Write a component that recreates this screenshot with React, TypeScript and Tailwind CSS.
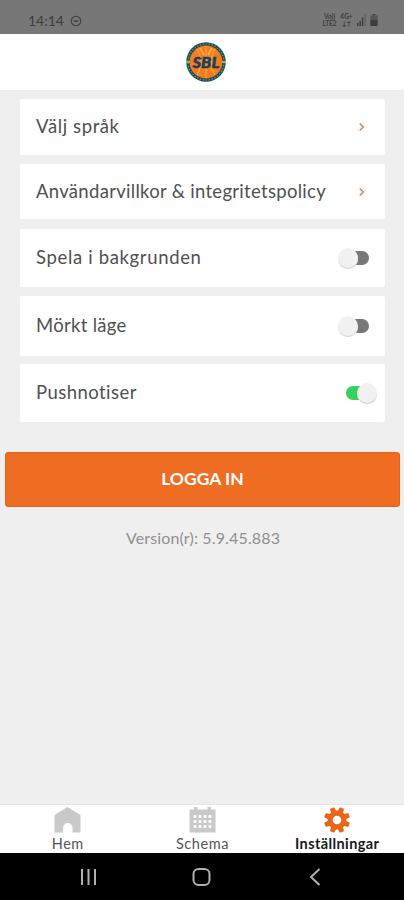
import React from 'react';

const links = [
  { label: 'Välj språk', box: 'h-[56px] mb-[9px] pb-[1px]', text: 'tracking-[0.6px]' },
  { label: 'Användarvillkor & integritetspolicy', box: 'h-[55px] mb-[10px]', text: 'tracking-[0.3px]' },
];

const toggles = [
  { label: 'Spela i bakgrunden', on: false, box: 'h-[58px] mb-[9px]', text: 'tracking-[0.65px]' },
  { label: 'Mörkt läge', on: false, box: 'h-[60px] mb-[8px]', text: 'tracking-[0.3px]' },
  { label: 'Pushnotiser', on: true, box: 'h-[58px]', text: 'tracking-[0.45px]' },
];

function StatusBar() {
  return (
    <div className="flex h-[34px] items-start bg-[#777777] pl-[28px] pr-[26px] pt-[12px] text-[#3d3d3d]">
      <span className="w-[36px] whitespace-nowrap text-[14px] leading-[17px]">14:14</span>
      <svg className="ml-[6px] mt-[3px] h-[12px] w-[12px]" viewBox="0 0 12 12" fill="none" stroke="currentColor">
        <circle cx="6" cy="6" r="4.8" strokeWidth="1.1" />
        <path d="M3.5 6h5" strokeWidth="1.3" />
      </svg>
      <div className="ml-auto flex pt-[2px] text-[6.5px] font-bold leading-[6.5px]">
        <div className="w-[17px] text-center">
          <div>Vo))</div>
          <div>LTE2</div>
        </div>
        <div className="ml-[2px] w-[13px] text-center">
          <div>4G+</div>
          <div>↓↑</div>
        </div>
        <svg className="ml-[4px] h-[12px] w-[9px]" viewBox="0 0 9 12" fill="currentColor">
          <path d="M0 9h1.5v3H0zM2.4 7h1.5v5H2.4zM4.8 3.5h1.5V12H4.8z" />
          <path d="M7.4 0h1.3v12H7.4z" opacity=".35" />
        </svg>
        <svg className="ml-[4px] h-[12px] w-[8px]" viewBox="0 0 8 13" fill="currentColor">
          <path d="M2.5 0h3v1.5h-3z" />
          <path d="M0 1.5h8V7H0z" opacity=".55" />
          <path d="M0 6.5h8V12a1 1 0 0 1-1 1H1a1 1 0 0 1-1-1z" />
        </svg>
      </div>
    </div>
  );
}

function Logo() {
  return (
    <svg className="h-[40px] w-[40px]" viewBox="0 0 40 40">
      <circle cx="20" cy="20" r="19.8" fill="#174f5c" />
      <circle cx="20" cy="20" r="18" fill="none" stroke="#86925b" strokeWidth="1.2" strokeDasharray="1.4 1.6" />
      <circle cx="20" cy="20" r="16.4" fill="#f47b20" />
      <g fill="none" stroke="#f9b13c" strokeWidth="1">
        <path d="M20 4v32M11 7c5 7 5 19 0 26M29 7c-5 7-5 19 0 26" />
        <path d="M14 6l4 7M26 6l-4 7" strokeWidth="1.8" />
      </g>
      <path d="M0 20h4M36 20h4" stroke="#e9bf3f" strokeWidth="1.4" />
      <text
        x="20"
        y="25.5"
        textAnchor="middle"
        textLength="27"
        lengthAdjust="spacingAndGlyphs"
        fill="#17405f"
        stroke="#17405f"
        strokeWidth=".5"
        fontSize="15"
        fontStyle="italic"
        fontWeight="900"
        fontFamily="Lato, sans-serif"
      >
        SBL
      </text>
    </svg>
  );
}

function Toggle({ on }: { on: boolean }) {
  return (
    <svg
      className={on ? 'mr-[7px] h-[24px] w-[34px]' : 'mr-[14px] h-[24px] w-[34px]'}
      viewBox="0 0 34 24"
    >
      {on ? (
        <>
          <rect x="2" y="5" width="26" height="14" rx="7" fill="#35d35d" />
          <circle cx="23" cy="13.2" r="10" fill="#d0d0d0" />
          <circle cx="23" cy="12" r="10" fill="#f1f1f1" />
        </>
      ) : (
        <>
          <rect x="8" y="5" width="24" height="14" rx="7" fill="#777777" />
          <circle cx="11" cy="13.2" r="10" fill="#dadada" />
          <circle cx="11" cy="12" r="10" fill="#f1f1f1" />
        </>
      )}
    </svg>
  );
}

function HomeIcon() {
  return (
    <svg className="h-[26px] w-[27px]" viewBox="0 0 27 26" fill="#c9c9c9">
      <path d="M13.5 0L26.5 8v17.5h-8v-4.8a4.7 4.7 0 0 0-9.4 0v4.8H.5V8z" />
    </svg>
  );
}

function CalendarIcon() {
  return (
    <svg className="h-[26px] w-[27px]" viewBox="0 0 27 26">
      <path d="M.5 2.5h26v23H.5zM5 0h3.5v4H5zM18.5 0H22v4h-3.5z" fill="#c9c9c9" />
      <g fill="#fff">
        {[8, 13, 18].map((y) =>
          [4.5, 9.5, 14.5, 19.5].map((x) => <rect key={`${x}-${y}`} x={x} y={y} width="3" height="3" rx="1" />)
        )}
      </g>
    </svg>
  );
}

function GearIcon() {
  return (
    <svg className="h-[26px] w-[26px]" viewBox="-13 -13 26 26">
      <g fill="#ec6516">
        {[22.5, 67.5, 112.5, 157.5, 202.5, 247.5, 292.5, 337.5].map((a) => (
          <path key={a} d="M-2.9 -8L-2.3 -12.4Q-2.2 -13 -1.6 -13H1.6Q2.2 -13 2.3 -12.4L2.9 -8z" transform={`rotate(${a})`} />
        ))}
        <circle r="9.4" />
      </g>
      <circle r="4.3" fill="#fff" />
    </svg>
  );
}

export default function App() {
  return (
    <div className="flex h-[900px] w-[404px] flex-col overflow-hidden bg-[#efefef] font-['Lato',sans-serif]">
      <StatusBar />

      {/* Header */}
      <header className="flex h-[56px] items-center justify-center bg-white pl-[8px]">
        <Logo />
      </header>

      {/* Settings list */}
      <main className="flex-1 pt-[9px]">
        <div className="pl-[20px] pr-[19px] text-[#505050]">
          {links.map((item) => (
            <div key={item.label} className={`flex items-center rounded-[2px] bg-white pl-[16px] pr-[20px] ${item.box}`}>
              <span className={`whitespace-nowrap text-[18.5px] ${item.text}`}>{item.label}</span>
              <svg className="ml-auto h-[8px] w-[7px]" viewBox="0 0 7 9" fill="none" stroke="#ee8250" strokeWidth="1.8">
                <path d="M1.5 .8L5.5 4.5 1.5 8.2" />
              </svg>
            </div>
          ))}
          {toggles.map((item) => (
            <div key={item.label} className={`flex items-center justify-between rounded-[2px] bg-white pl-[16px] ${item.box}`}>
              <span className={`whitespace-nowrap text-[18.5px] ${item.text}`}>{item.label}</span>
              <Toggle on={item.on} />
            </div>
          ))}
        </div>

        <div className="mt-[30px] pl-[5px] pr-[4px]">
          <button className="h-[55px] w-full rounded-[3px] border border-[#e3611a] bg-[#ef6c23] text-[17.5px] font-bold text-white">
            LOGGA IN
          </button>
        </div>
        <p className="mt-[20px] pl-[2px] text-center text-[16px] leading-[22px] tracking-[0.15px] text-[#909090]">
          Version(r): 5.9.45.883
        </p>
      </main>

      {/* Tab bar */}
      <nav className="grid h-[49px] grid-cols-3 border-t border-[#e6e6e6] bg-white pt-[2px] text-[14.5px] leading-[22px] text-[#555555]">
        <div className="flex flex-col items-center pl-[1px]">
          <HomeIcon />
          <span className="tracking-[0.5px]">Hem</span>
        </div>
        <div className="flex flex-col items-center pl-[1px]">
          <CalendarIcon />
          <span className="tracking-[0.6px]">Schema</span>
        </div>
        <div className="flex flex-col items-center pl-[1px]">
          <GearIcon />
          <span className="font-bold tracking-[0.4px] text-[#191919]">Inställningar</span>
        </div>
      </nav>

      {/* System navigation */}
      <div className="flex h-[47px] items-start bg-black pt-[15px]">
        <svg className="ml-[80px] h-[18px] w-[17px]" viewBox="0 0 17 18" fill="#b0b0b0">
          <path d="M1 1h2v16H1zM7.5 1h2v16h-2zM14 1h2v16h-2z" />
        </svg>
        <svg className="ml-[95px] h-[18px] w-[19px]" viewBox="0 0 19 18" fill="none" stroke="#b0b0b0" strokeWidth="2">
          <rect x="1.5" y="1" width="16" height="16" rx="5" />
        </svg>
        <svg className="ml-[98px] h-[18px] w-[12px]" viewBox="0 0 12 18" fill="none" stroke="#b0b0b0" strokeWidth="2">
          <path d="M10.5 1L2 9l8.5 8" />
        </svg>
      </div>
    </div>
  );
}
